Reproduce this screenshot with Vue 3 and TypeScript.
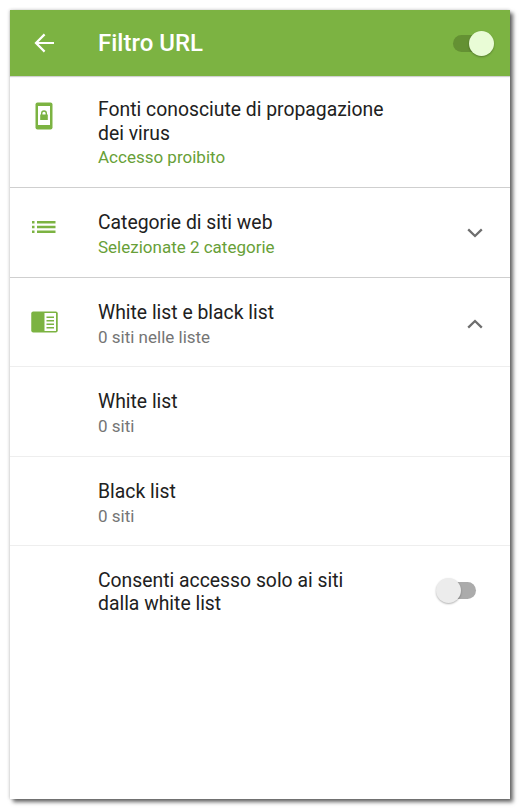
<script setup lang="ts">
interface Row {
  title: string[]
  sub?: string
  subGreen?: boolean
  icon?: string
  chevron?: 'up' | 'down'
  toggle?: boolean
  line: 'strong' | 'soft' | 'none'
  cls: string
}

const rows: Row[] = [
  { title: ['Fonti conosciute di propagazione', 'dei virus'], sub: 'Accesso proibito', subGreen: true, icon: 'phone', line: 'strong', cls: 'row-virus' },
  { title: ['Categorie di siti web'], sub: 'Selezionate 2 categorie', subGreen: true, icon: 'list', chevron: 'down', line: 'strong', cls: 'row-std' },
  { title: ['White list e black list'], sub: '0 siti nelle liste', icon: 'book', chevron: 'up', line: 'soft', cls: 'row-std' },
  { title: ['White list'], sub: '0 siti', line: 'soft', cls: 'row-std' },
  { title: ['Black list'], sub: '0 siti', line: 'soft', cls: 'row-std' },
  { title: ['Consenti accesso solo ai siti', 'dalla white list'], toggle: true, line: 'none', cls: 'row-toggle' }
]
</script>

<template>
  <div class="page">
    <div class="screen">
      <header class="bar">
        <svg class="back" width="24" height="24" viewBox="0 0 24 24">
          <path d="M22 12H4.500M12.600 3.400 4 12l8.600 8.600" fill="none" stroke="#fff" stroke-width="2.200" />
        </svg>
        <span class="bar-title">Filtro URL</span>
        <div class="switch switch-on">
          <span class="track" />
          <span class="knob" />
        </div>
      </header>

      <div v-for="row in rows" :key="row.title[0]" class="row" :class="[row.cls, `line-${row.line}`]">
        <div class="lead">
          <svg v-if="row.icon === 'phone'" width="18" height="28" viewBox="0 0 18 28">
            <rect width="17" height="27" x="0.5" y="0.5" rx="2" fill="#7cb342" />
            <rect x="3" y="4" width="12" height="19" fill="#fff" />
            <path d="M6 12.5v-1.2a3 3 0 0 1 6 0v1.2h.8V18H5.200v-5.500zM7.400 12.500h3.200v-1.200a1.600 1.600 0 0 0-3.200 0z" fill="#7cb342" fill-rule="evenodd" />
          </svg>
          <svg v-else-if="row.icon === 'list'" width="24" height="14" viewBox="0 0 24 14">
            <path d="M0 1h2.500v2.400H0zM0 5.800h2.500v2.400H0zM0 10.600h2.500V13H0zM5 1h18.500v2.400H5zM5 5.800h18.500v2.400H5zM5 10.600h18.500V13H5z" fill="#7cb342" />
          </svg>
          <svg v-else-if="row.icon === 'book'" class="book" width="27" height="22" viewBox="0 0 27 22">
            <rect width="26.500" height="21" x="0.250" y="0.500" rx="2" fill="#7cb342" />
            <rect x="13.500" y="2" width="11.500" height="18" fill="#fff" />
            <path d="M15.500 5.500h7.500v1.600h-7.500zM15.500 9h7.500v1.600h-7.500zM15.500 12.500h7.500v1.600h-7.500zM15.500 16h7.500v1.400h-7.500z" fill="#7cb342" />
          </svg>
        </div>

        <div class="body">
          <div class="title">
            <div v-for="text in row.title" :key="text">{{ text }}</div>
          </div>
          <div v-if="row.sub" class="sub" :class="{ green: row.subGreen }">{{ row.sub }}</div>
        </div>

        <div class="trail">
          <svg v-if="row.chevron" width="18" height="12" viewBox="0 0 18 12" :class="{ flip: row.chevron === 'up' }">
            <path d="M2.200 2.400 9 9l6.800-6.600" fill="none" stroke="#6e6e6e" stroke-width="2.300" />
          </svg>
          <div v-if="row.toggle" class="switch switch-off">
            <span class="track" />
            <span class="knob" />
          </div>
        </div>
      </div>
    </div>
  </div>
</template>

<style>
html,
body {
  margin: 0;
  background: #fff;
}
</style>

<style scoped>
.page {
  box-sizing: border-box;
  height: 810px;
  padding: 10px 0 0 10px;
  overflow: hidden;
}

.screen {
  box-sizing: border-box;
  width: 500px;
  height: 789px;
  background: #fff;
  font-family: Roboto, "Noto Sans", sans-serif;
  box-shadow: 3px 3px 4px rgba(0, 0, 0, 0.6), -1px 0 3px rgba(0, 0, 0, 0.12), 0 -1px 3px rgba(0, 0, 0, 0.06);
}

.bar {
  display: flex;
  align-items: center;
  height: 66px;
  background: #7cb342;
  box-shadow: 0 1px 1px rgba(0, 0, 0, 0.18);
  position: relative;
}

.back {
  margin-left: 22px;
}

.bar-title {
  margin-left: 42px;
  flex: 1;
  font-size: 24px;
  font-weight: 500;
  color: #fff;
}

.row {
  display: flex;
  box-sizing: border-box;
  color: #212121;
}

.row-virus {
  height: 112px;
  padding-top: 22px;
}

.row-std {
  height: 89.500px;
  padding-top: 23px;
}

.row-toggle {
  padding-top: 23px;
}

.line-strong {
  border-bottom: 1px solid #cfcfcf;
}

.line-soft {
  border-bottom: 1px solid #eeeeee;
}

.lead {
  display: flex;
  justify-content: center;
  flex: none;
  width: 88px;
  padding-top: 8px;
  box-sizing: border-box;
  height: 40px;
}

.row-virus .lead {
  padding-top: 3px;
}

.lead svg {
  margin-top: 1px;
  margin-right: 20px;
}

.lead .book {
  margin-top: 2px;
}

.body {
  flex: 1;
  min-width: 0;
}

.title {
  font-size: 19.350px;
  line-height: 23.500px;
  white-space: nowrap;
}

.row-toggle .title {
  line-height: 23px;
}

.sub {
  margin-top: 1.500px;
  font-size: 17px;
  line-height: 22px;
  color: #757575;
}

.row-virus .sub {
  margin-top: 0.500px;
}

.sub.green {
  color: #689f38;
}

.trail {
  display: flex;
  align-items: center;
  justify-content: center;
  flex: none;
  width: 70px;
  height: 44px;
}

.row-toggle .trail {
  justify-content: flex-end;
}

.flip {
  transform: scaleY(-1);
  margin-top: 2px;
}

.switch {
  position: relative;
  flex: none;
  width: 42px;
  height: 26px;
}

.track {
  position: absolute;
  left: 3px;
  top: 4px;
  width: 37px;
  height: 17px;
  border-radius: 9px;
}

.knob {
  position: absolute;
  top: 0;
  width: 25px;
  height: 25px;
  border-radius: 50%;
  box-shadow: 0 1px 2px rgba(0, 0, 0, 0.3);
}

.switch-on {
  margin-right: 16px;
  top: 1px;
}

.switch-on .track {
  left: 1px;
  background: #649133;
}

.switch-on .knob {
  right: 0;
  background: #e9fcd6;
}

.switch-off {
  margin-right: 32px;
}

.switch-off .track {
  background: #ababab;
}

.switch-off .knob {
  left: 0;
  background: #ececec;
}
</style>
